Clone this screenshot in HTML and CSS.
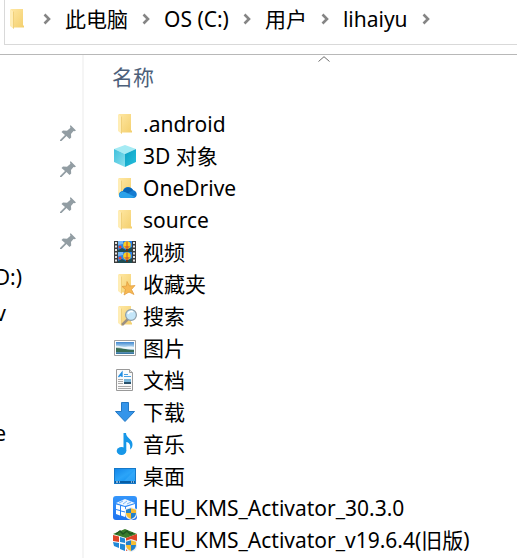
FILE: index.html
```html
<!DOCTYPE html>
<html lang="zh-CN">
<head>
<meta charset="utf-8">
<title>lihaiyu</title>
<link rel="stylesheet" href="styles.css">
</head>
<body>
<svg class="defs" aria-hidden="true">
  <defs>
    <linearGradient id="gold" x1="0" y1="0" x2="1" y2="1"><stop offset="0" stop-color="#ffe7a2"/><stop offset="1" stop-color="#f3cf6d"/></linearGradient>
    <linearGradient id="sky" x1="0" y1="0" x2="0" y2="1"><stop offset="0" stop-color="#3f86cf"/><stop offset=".5" stop-color="#d3ecf8"/><stop offset="1" stop-color="#2c6d9b"/></linearGradient>
    <linearGradient id="desk" x1="0" y1="0" x2="1" y2="1"><stop offset="0" stop-color="#1387ea"/><stop offset=".5" stop-color="#2ba4f8"/><stop offset="1" stop-color="#0c8df0"/></linearGradient>
    <linearGradient id="app" x1="0" y1="0" x2="0" y2="1"><stop offset="0" stop-color="#3596fb"/><stop offset="1" stop-color="#1f74f0"/></linearGradient>
    <linearGradient id="cube" x1="0" y1="0" x2="1" y2="1"><stop offset="0" stop-color="#3fc0dc"/><stop offset="1" stop-color="#8ae0ee"/></linearGradient>
    <linearGradient id="side" x1="0" y1="0" x2="1" y2="1"><stop offset="0" stop-color="#0b9fc2"/><stop offset="1" stop-color="#27c0de"/></linearGradient>
    <symbol id="folder" viewBox="0 0 24 24"><path d="M6 2h12v16.500h1v2H7z" fill="url(#gold)"/><path d="M5 2l4 3v17l-4-3z" fill="#ffedb5"/><path d="M9 5v17l-1-1V4z" fill="#f0d07a"/></symbol>
    <symbol id="chevron" viewBox="0 0 8 12"><path d="M1.500 1.500L6 6l-4.500 4.500" fill="none" stroke="#858585" stroke-width="2.600"/></symbol>
    <symbol id="pin" viewBox="0 0 16 16"><path d="M10.500 0L16 5.500l-1.500.7-1-.2-2.500 3 .2 3.500L9.500 14 6.500 11 1.500 16H0v-1l5-5-3.500-3L3 5.500l4 .2 3.500-3-.5-1z" fill="#929da3"/></symbol>
    <symbol id="shield" viewBox="0 0 12 13"><path d="M6 0l6 2v4c0 4-2 6-6 7-4-1-6-3-6-7V2z" fill="#e8edf2"/><path d="M6 1.200V6H1V2.800z" fill="#2380ca"/><path d="M6 1.200V6h5V2.800z" fill="#f7bd32"/><path d="M1 6h5v6C3 11 1 9 1 6z" fill="#f7bd32"/><path d="M6 6h5c0 3-2 5-5 6z" fill="#2380ca"/></symbol>
    <symbol id="balloon" viewBox="0 0 14 11"><path d="M0 0h14v11H0z" fill="#2b82ec"/><path d="M0 9l4-2 4 2 6-3v5H0z" fill="#1f4c52"/><path d="M0 0h5v3L0 4z" fill="#75b8f7"/><ellipse cx="9" cy="4" rx="3.800" ry="3.800" fill="#f6cf24"/><path d="M6 5h6l-2 3H8z" fill="#d9862a"/><path d="M8.500 .4v7h1v-7z" fill="#d44b26"/><path d="M8 8h2v2H8z" fill="#6b3017"/><circle cx="2" cy="6" r="1.500" fill="#e8402c"/></symbol>
  </defs>
</svg>

<header class="toolbar">
  <nav class="address" aria-label="地址">
    <svg class="icon"><use href="#folder"/></svg>
    <svg class="chevron"><use href="#chevron"/></svg>
    <button class="crumb" type="button">此电脑</button>
    <svg class="chevron"><use href="#chevron"/></svg>
    <button class="crumb" type="button">OS (C:)</button>
    <svg class="chevron"><use href="#chevron"/></svg>
    <button class="crumb" type="button">用户</button>
    <svg class="chevron"><use href="#chevron"/></svg>
    <button class="crumb" type="button">lihaiyu</button>
    <svg class="chevron"><use href="#chevron"/></svg>
  </nav>
</header>

<div class="explorer">
  <aside class="sidebar">
    <ul class="tree">
      <li class="node"><svg class="pin"><use href="#pin"/></svg></li>
      <li class="node"><svg class="pin"><use href="#pin"/></svg></li>
      <li class="node"><svg class="pin"><use href="#pin"/></svg></li>
      <li class="node"><svg class="pin"><use href="#pin"/></svg></li>
      <li class="node drive">D:)</li>
      <li class="node entry">v</li>
    </ul>
    <ul class="tree lower">
      <li class="node entry">e</li>
    </ul>
  </aside>

  <main class="files">
    <table class="listing">
      <thead>
        <tr><th aria-sort="ascending"><button class="sort" type="button"><svg class="caret" viewBox="0 0 12 6"><path d="M.5 5.500L6 .700l5.500 4.800" fill="none" stroke="#6d6d6d"/></svg>名称</button></th></tr>
      </thead>
      <tbody>
        <tr><td><div class="file"><svg class="icon"><use href="#folder"/></svg>.android</div></td></tr>
        <tr><td><div class="file"><svg class="icon" viewBox="0 0 24 24"><path d="M12 1l11 4-11 5L1 5z" fill="#a5ebf4"/><path d="M1 5l11 5v13L1 18z" fill="url(#cube)"/><path d="M23 5l-11 5v13l11-5z" fill="url(#side)"/></svg>3D 对象</div></td></tr>
        <tr><td><div class="file"><svg class="icon" viewBox="0 0 24 24"><use href="#folder"/><path d="M6 19c0-3 2-4 4-4 1-5 8-5 10-1 5 1 5 8 0 8H9c-2 0-3-1-3-3z" fill="#147bd1"/><path d="M10 15c2-5 8-4 10-1l-6 4z" fill="#0865b7"/><path d="M6 19c1-4 5-4 8-2l8 4c-2 1-4 1-13 1-2 0-3-1-3-3z" fill="#2ba2ea"/></svg>OneDrive</div></td></tr>
        <tr><td><div class="file"><svg class="icon"><use href="#folder"/></svg>source</div></td></tr>
        <tr><td><div class="file"><svg class="icon" viewBox="0 0 24 24"><path d="M1 1h22v22H1z" fill="#3c3c3c"/><path d="M3 2v20M21 2v20" stroke="#e5e5e5" stroke-width="2" stroke-dasharray="2 1.500"/><use href="#balloon" x="5" y="1" width="14" height="11"/><use href="#balloon" x="5" y="12" width="14" height="11"/></svg>视频</div></td></tr>
        <tr><td><div class="file"><svg class="icon" viewBox="0 0 24 24"><use href="#folder"/><path d="M14 9.500l2.500 4.500 5.500-.5-3.500 4L21 22.500l-5-2.500-5 3 1.500-5.500L9 14.500l4.500-.5z" fill="#f7b954" stroke="#e09a3a" stroke-width=".7"/></svg>收藏夹</div></td></tr>
        <tr><td><div class="file"><svg class="icon" viewBox="0 0 24 24"><use href="#folder"/><path d="M15 15l-6 6" stroke="#9b9084" stroke-width="2.500"/><circle cx="18" cy="11" r="5.400" fill="#c5e6f9" stroke="#8e9da8" stroke-width="1.200"/><path d="M15 10c1-3 4-3 5-2" fill="none" stroke="#fff" stroke-width="1.500"/></svg>搜索</div></td></tr>
        <tr><td><div class="file"><svg class="icon" viewBox="0 0 24 24"><path d="M1.500 4.500h21v15h-21z" fill="#fff" stroke="#a1a1a1"/><path d="M3 6h18v12H3z" fill="url(#sky)"/><path d="M3 11c6 0 8 3 18 3v2H3z" fill="#376c55"/><path d="M3 10c3-1 5 1 8 1s5-1 10 0v2c-5 1-12-1-18-1z" fill="#fff" opacity=".7"/></svg>图片</div></td></tr>
        <tr><td><div class="file"><svg class="icon" viewBox="0 0 24 24"><path d="M3.500 1.500h13l3 3v18h-16z" fill="#fafafa" stroke="#999"/><path d="M16.500 1.500v3h3" fill="#ddd" stroke="#999"/><path d="M5.500 9L9 4.500V9M7 7.500h2" fill="none" stroke="#1f8de4" stroke-width="1.300"/><path d="M11 6.500h4M11 8.500h7" stroke="#4aa0e3"/><path d="M5 11.500h5M5 13.500h5M5 15.500h5M5 18.500h13M5 20.500h13" stroke="#aaa"/><path d="M11 11h7v5h-7z" fill="#79b5d9"/><path d="M11 14h7v2h-7z" fill="#29516b"/></svg>文档</div></td></tr>
        <tr><td><div class="file"><svg class="icon" viewBox="0 0 24 24"><path d="M8.500 2.500h7v9h6L12 21.500 2.500 11.500h6z" fill="#3595ea" stroke="#2479c5"/></svg>下载</div></td></tr>
        <tr><td><div class="file"><svg class="icon" viewBox="0 0 24 24"><ellipse cx="8.500" cy="19" rx="4.800" ry="4" fill="#1797e8"/><path d="M10.500 1h2.500c0 5 7 6 6.500 12-.2 3-2 4-2.500 4.500 1-4-.5-7-3.700-7.500v9h-2.800z" fill="#1797e8"/></svg>音乐</div></td></tr>
        <tr><td><div class="file"><svg class="icon" viewBox="0 0 24 24"><path d="M1 4h22v16H1z" fill="#1678c8"/><path d="M2 5h20v12H2z" fill="url(#desk)"/><path d="M11 17L22 6v11z" fill="#43b2fb" opacity=".5"/><path d="M2 17h20v2H2z" fill="#065da5"/><path d="M3 18h2M6 18h1M18 18h1M20 18h1" stroke="#fff"/></svg>桌面</div></td></tr>
        <tr><td><div class="file"><svg class="icon" viewBox="0 0 24 24"><rect width="24" height="24" rx="3" fill="url(#app)"/><path d="M3 7l9-4 10 4-10 3z" fill="#eef6ff"/><path d="M6 7l4-2M10 8l4-3M14 8l4-2" stroke="#79b7fa"/><path d="M3 8.500l4 1v4.500l-4-1zM8 10l4 1v4.500l-4-1zM3 14l4 1v4.500l-4-1.500zM8 15.500l4 1V21l-4-1.500zM13 11l9-3v9l-9 4z" fill="#fff"/><use href="#shield" x="12" y="11" width="12" height="13"/></svg>HEU_KMS_Activator_30.3.0</div></td></tr>
        <tr><td><div class="file"><svg class="icon" viewBox="0 0 24 24"><path d="M0 6l12-5 12 5-11 4z" fill="#397c2b"/><path d="M3 6l4-3 3 3 4-3 3 3 3-1" fill="none" stroke="#1f5521" stroke-width="1.500"/><path d="M13 10l11-4v12l-11 5z" fill="#df4427"/><path d="M0 7l6 1.500V14l-6-1z" fill="#df4427"/><path d="M7 9l5 1.500V15l-5-1zM0 14l6 1v5l-5-2zM7 15.500l5 1V23l-5-2z" fill="#2188d6"/><use href="#shield" x="12" y="11" width="12" height="13"/></svg>HEU_KMS_Activator_v19.6.4(旧版)</div></td></tr>
      </tbody>
    </table>
  </main>
</div>
</body>
</html>
```
FILE: styles.css
```css
* {
  box-sizing: border-box;
}

body {
  margin: 0;
  min-height: 100vh;
  display: flex;
  flex-direction: column;
  overflow: hidden;
  background: #fff;
  color: #000;
  font: 21px/32px "Noto Sans", "Noto Sans CJK SC", sans-serif;
}

button {
  margin: 0;
  padding: 0;
  border: 0;
  background: none;
  color: inherit;
  font: inherit;
}

svg {
  display: block;
  flex: none;
}

.defs {
  position: absolute;
  width: 0;
  height: 0;
}

.icon {
  width: 24px;
  height: 24px;
}

.toolbar {
  padding: 0 0 9px 4px;
  border-bottom: 1px solid #b8b8b8;
}

.address {
  display: flex;
  align-items: center;
  gap: 14px;
  height: 45px;
  padding-bottom: 6px;
  border-left: 1px solid #d9d9d9;
  border-bottom: 1px solid #d9d9d9;
  white-space: nowrap;
}

.chevron {
  width: 8px;
  height: 12px;
}

.explorer {
  flex: 1;
  display: flex;
}

.sidebar {
  flex: none;
  width: 84px;
  padding-top: 60px;
  border-right: 2px solid #f5f5f5;
  overflow: hidden;
}

.tree {
  margin: 0;
  padding: 0;
  list-style: none;
}

.lower {
  padding-top: 84px;
}

.node {
  display: flex;
  align-items: center;
  justify-content: flex-end;
  height: 36px;
  padding-right: 6px;
}

.pin {
  width: 16px;
  height: 16px;
}

.drive {
  padding-right: 60px;
}

.entry {
  padding-right: 76px;
}

.files {
  flex: 1;
  min-width: 0;
  overflow: hidden;
}

.listing {
  width: 480px;
  border-collapse: collapse;
}

.listing th,
.listing td {
  padding: 0;
  font-weight: normal;
  text-align: left;
}

.sort {
  display: block;
  width: 100%;
  height: 53px;
  padding: 3px 0 12px 28px;
  position: relative;
  color: #4c607a;
  text-align: left;
}

.caret {
  position: absolute;
  top: 1px;
  left: 50%;
  width: 12px;
  height: 6px;
  margin-left: -6px;
}

.file {
  display: flex;
  align-items: center;
  gap: 6px;
  height: 32px;
  padding-left: 29px;
  white-space: nowrap;
}
```
